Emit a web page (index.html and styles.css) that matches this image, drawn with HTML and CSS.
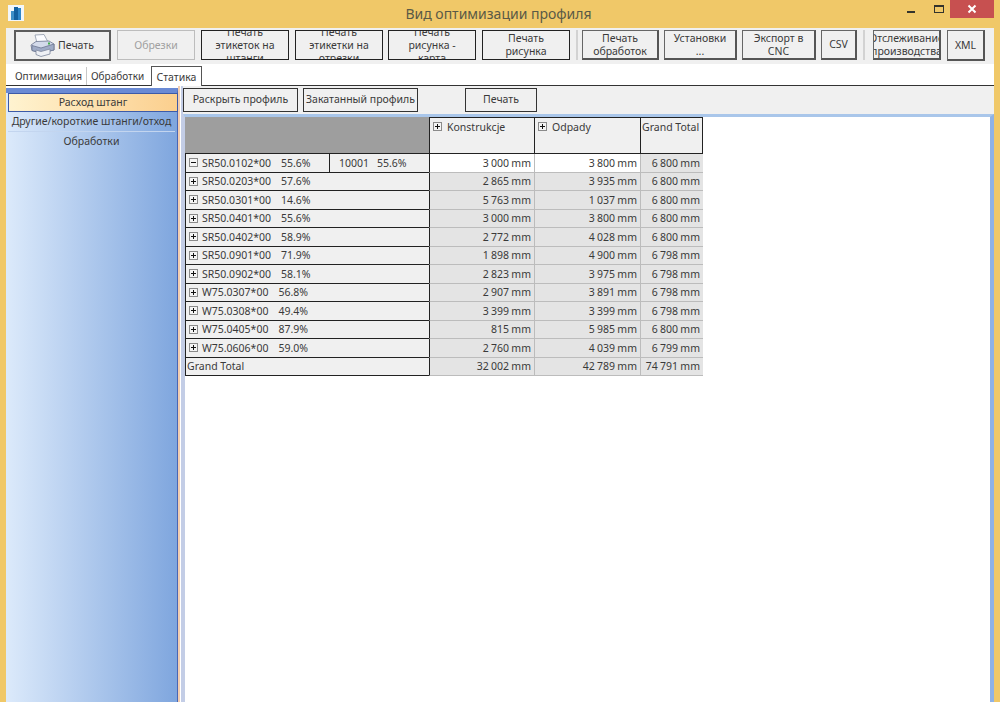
FILE: index.html
```html
<!DOCTYPE html>
<html lang="ru">
<head>
    <meta charset="UTF-8">
    <title>Вид оптимизации профиля</title>
    <link rel="stylesheet" href="styles.css">
</head>
<body>
    <div id="titlebar">
        <svg class="appicon" width="16" height="16" viewBox="0 0 16 16">
            <rect width="16" height="16" fill="#f2f6fa"/>
            <rect x="3" y="6" width="3" height="9" fill="#3f8fc8"/>
            <rect x="6" y="2" width="4" height="13" fill="#14609f"/>
            <rect x="10" y="3" width="3" height="12" fill="#2f86c8"/>
        </svg>
        <div class="title">Вид оптимизации профиля</div>
        <div class="wincontrols">
            <span class="winmin"></span>
            <span class="winmax"></span>
            <span class="winclose">
                <svg width="10" height="10" viewBox="0 0 10 10"><path d="M1.5 1.5L8.5 8.5M8.5 1.5L1.5 8.5" stroke="#fff" stroke-width="2"/></svg>
            </span>
        </div>
    </div>

    <div id="main">
        <div id="toolbar">
            <button class="btn w-print thick">
                <svg width="25" height="23" viewBox="0 0 25 23">
                    <path d="M5 1L14 0.5L18 8L7 9Z" fill="#fbfcff" stroke="#8d97a8" stroke-width="0.8"/>
                    <path d="M1 11L6 7.5L19 7L24 10V16L11 19L2 16.5Z" fill="#d3daea" stroke="#6c7690" stroke-width="0.8"/>
                    <path d="M2 11.5L11 14L24 10V16L11 19L2 16.5Z" fill="#9fabc6" stroke="#6c7690" stroke-width="0.8"/>
                    <path d="M6 16L11 17.5L20 15V20L11 22.5L6 20.5Z" fill="#eef0f5" stroke="#7c869c" stroke-width="0.8"/>
                    <rect x="18" y="8.5" width="2" height="2" fill="#3fae49"/>
                </svg>
                <span>Печать</span>
            </button>
            <button class="btn w-trim disabled">Обрезки</button>
            <button class="btn w-88 dark">Печать<br>этикеток на<br>штанги</button>
            <button class="btn w-88 dark tight">Печать<br>этикетки на<br>отрезки</button>
            <button class="btn w-88 dark">Печать<br>рисунка -<br>карта</button>
            <button class="btn w-88 dark">Печать<br>рисунка</button>
            <div class="sep"></div>
            <button class="btn w-proc">Печать<br>обработок</button>
            <button class="btn w-setup">Установки<br>...</button>
            <button class="btn w-cnc">Экспорт в<br>CNC</button>
            <button class="btn w-csv">CSV</button>
            <div class="sep sep-wide"></div>
            <button class="btn w-track">Отслеживание<br>производства</button>
            <button class="btn w-xml">XML</button>
        </div>

        <div id="tabs">
            <div class="tab tab-first">Оптимизация</div>
            <div class="tab tab-next">Обработки</div>
            <div class="tab active">Статика</div>
        </div>

        <div id="content">
            <div id="sidebar">
                <div class="side-item selected">Расход штанг</div>
                <div class="side-item">Другие/короткие штанги/отход</div>
                <div class="side-item">Обработки</div>
            </div>
            <div id="splitter"></div>
            <div id="panel">
                <div id="subbar">
                    <button class="btn sub w-open">Раскрыть профиль</button>
                    <button class="btn sub w-rolled">Закатанный профиль</button>
                    <button class="btn sub w-subprint">Печать</button>
                </div>
                <div id="gridarea">
                    <div id="pivot">
                        <div class="corner"></div>
                        <div class="colhead"><i class="box plus"></i>Konstrukcje</div>
                        <div class="colhead"><i class="box plus"></i>Odpady</div>
                        <div class="colhead total">Grand Total</div>

                        <div class="rowhead split"><i class="box minus"></i><span class="code">SR50.0102*00</span><span>55.6%</span></div>
                        <div class="rowhead sub-head"><span class="code">10001</span><span>55.6%</span></div>
                        <div class="val white">3 000 mm</div>
                        <div class="val white">3 800 mm</div>
                        <div class="val">6 800 mm</div>

                        <div class="rowhead wide"><i class="box plus"></i><span class="code">SR50.0203*00</span><span>57.6%</span></div>
                        <div class="val">2 865 mm</div><div class="val">3 935 mm</div><div class="val">6 800 mm</div>

                        <div class="rowhead wide"><i class="box plus"></i><span class="code">SR50.0301*00</span><span>14.6%</span></div>
                        <div class="val">5 763 mm</div><div class="val">1 037 mm</div><div class="val">6 800 mm</div>

                        <div class="rowhead wide"><i class="box plus"></i><span class="code">SR50.0401*00</span><span>55.6%</span></div>
                        <div class="val">3 000 mm</div><div class="val">3 800 mm</div><div class="val">6 800 mm</div>

                        <div class="rowhead wide"><i class="box plus"></i><span class="code">SR50.0402*00</span><span>58.9%</span></div>
                        <div class="val">2 772 mm</div><div class="val">4 028 mm</div><div class="val">6 800 mm</div>

                        <div class="rowhead wide"><i class="box plus"></i><span class="code">SR50.0901*00</span><span>71.9%</span></div>
                        <div class="val">1 898 mm</div><div class="val">4 900 mm</div><div class="val">6 798 mm</div>

                        <div class="rowhead wide"><i class="box plus"></i><span class="code">SR50.0902*00</span><span>58.1%</span></div>
                        <div class="val">2 823 mm</div><div class="val">3 975 mm</div><div class="val">6 798 mm</div>

                        <div class="rowhead wide"><i class="box plus"></i><span class="code">W75.0307*00</span><span>56.8%</span></div>
                        <div class="val">2 907 mm</div><div class="val">3 891 mm</div><div class="val">6 798 mm</div>

                        <div class="rowhead wide"><i class="box plus"></i><span class="code">W75.0308*00</span><span>49.4%</span></div>
                        <div class="val">3 399 mm</div><div class="val">3 399 mm</div><div class="val">6 798 mm</div>

                        <div class="rowhead wide"><i class="box plus"></i><span class="code">W75.0405*00</span><span>87.9%</span></div>
                        <div class="val">815 mm</div><div class="val">5 985 mm</div><div class="val">6 800 mm</div>

                        <div class="rowhead wide"><i class="box plus"></i><span class="code">W75.0606*00</span><span>59.0%</span></div>
                        <div class="val">2 760 mm</div><div class="val">4 039 mm</div><div class="val">6 799 mm</div>

                        <div class="rowhead wide grand">Grand Total</div>
                        <div class="val">32 002 mm</div><div class="val">42 789 mm</div><div class="val">74 791 mm</div>
                    </div>
                </div>
            </div>
        </div>
    </div>
</body>
</html>
```

FILE: styles.css
```css
* {
    box-sizing: border-box;
}
html, body {
    height: 100%;
    margin: 0;
    overflow: hidden;
}
body {
    font-family: "Noto Sans", sans-serif;
    font-size: 10.5px;
    color: #3a3a3a;
    background-color: #f0c868;
    display: flex;
    flex-direction: column;
    padding: 0 6px;
}

/* title bar */
#titlebar {
    height: 28px;
    flex: none;
    display: flex;
    align-items: flex-start;
}
.appicon {
    margin: 5px 0 0 2px;
    flex: none;
}
.title {
    flex: 1;
    text-align: center;
    font-size: 14px;
    line-height: 20px;
    color: #5a5a46;
    padding: 4px 0 0 66px;
}
.wincontrols {
    display: flex;
    align-items: flex-start;
    width: 87px;
    flex: none;
}
.winmin {
    width: 8px;
    height: 2px;
    background-color: #33332c;
    margin: 11px 0 0 0;
}
.winmax {
    width: 10px;
    height: 8px;
    border: 1px solid #33332c;
    border-top-width: 2px;
    margin: 5px 0 0 19px;
}
.winclose {
    width: 44px;
    height: 18px;
    background-color: #c75050;
    margin-left: 6px;
    display: flex;
    align-items: center;
    justify-content: center;
}

#main {
    flex: 1;
    display: flex;
    flex-direction: column;
    background-color: #fff;
    min-height: 0;
}

/* toolbar */
#toolbar {
    height: 36px;
    flex: none;
    background-color: #f0f0f0;
    display: flex;
    align-items: flex-start;
    padding: 2px 0 0 8px;
}
.btn {
    font-family: inherit;
    font-size: 10.5px;
    line-height: 13px;
    color: #3a3a3a;
    background-color: #f0f0f0;
    border: 1px solid #666;
    border-right: 2px solid #555;
    border-bottom: 2px solid #555;
    padding: 0;
    margin: 0 6px 0 0;
    height: 30px;
    overflow: hidden;
    flex: none;
    display: flex;
    align-items: center;
    justify-content: center;
    text-align: center;
    white-space: nowrap;
}
.thick {
    border: 2px solid #5c5c5c;
    height: 31px;
    justify-content: flex-start;
    padding-left: 14px;
}
.thick svg {
    margin-right: 3px;
}
.dark {
    border: 1px solid #222;
}
.disabled {
    border: 1px solid #bdbdbd;
    color: #a0a0a0;
}
.tight { margin-right: 5px; }
.w-print { width: 97px; }
.w-trim { width: 78px; }
.w-88 { width: 88px; }
.w-proc { width: 77px; margin-right: 5px; }
.w-setup { width: 73px; margin-right: 5px; }
.w-cnc { width: 74px; margin-right: 5px; }
.w-csv { width: 36px; }
.w-track { width: 68px; }
.w-xml { width: 38px; height: 31px; }
.sep {
    width: 2px;
    height: 30px;
    background-color: #d2d2d2;
    margin: 0 4px 0 0;
    flex: none;
}
.sep-wide {
    margin-right: 8px;
}

/* tabs */
#tabs {
    height: 22px;
    flex: none;
    display: flex;
    align-items: flex-end;
    padding-left: 4px;
    border-bottom: 1px solid #333;
    background-color: #fff;
}
.tab {
    height: 18px;
    font-size: 10px;
    line-height: 13px;
    padding-top: 3px;
    white-space: nowrap;
}
.tab-first {
    width: 76px;
    padding-left: 5px;
}
.tab-next {
    width: 65px;
    border-left: 1px solid #c8c8c8;
    padding-left: 4px;
}
.active {
    width: 51px;
    font-size: 10.5px;
    text-align: center;
    background-color: #fff;
    border: 1px solid #555;
    border-bottom: none;
    height: 20px;
    padding-top: 4px;
    margin-bottom: -1px;
}

/* left side */
#content {
    flex: 1;
    display: flex;
    min-height: 0;
}
#sidebar {
    width: 172px;
    flex: none;
    margin-top: 2px;
    background: linear-gradient(to right, #dceafb, #7fa6de);
    border-right: 1px solid #4a66b4;
    border-top: 5px solid #6a8ad4;
    padding: 0 0 0 2px;
}
.side-item {
    height: 20px;
    line-height: 19px;
    text-align: center;
    margin-right: 2px;
    border-bottom: 1px solid #c3d5ef;
    white-space: nowrap;
}
.side-item:last-child {
    border-bottom: none;
}
.selected {
    background: linear-gradient(to right, #fff3d0, #fbcf8e);
    border: 1px solid #3c5aa8;
    height: 19px;
    line-height: 17px;
    margin-right: -1px;
}
#splitter {
    width: 5px;
    flex: none;
    background: linear-gradient(to right, #f2cdb0 0, #f2cdb0 2px, #fff 2px, #fff 3px, #c3cde6 3px);
}

/* right side */
#panel {
    flex: 1;
    display: flex;
    flex-direction: column;
    min-width: 0;
}
#subbar {
    height: 28px;
    flex: none;
    background-color: #f0f0f0;
    display: flex;
    align-items: flex-start;
    padding-top: 2px;
}
.sub {
    height: 24px;
    border: 1px solid #333;
    padding-bottom: 1px;
}
.w-open { width: 115px; margin-right: 5px; }
.w-rolled { width: 115px; margin-right: 47px; }
.w-subprint { width: 72px; }

#gridarea {
    flex: 1;
    background-color: #fff;
    border-top: 3px solid #a9c6ea;
    border-right: 4px solid #8fb2e6;
    border-left: 2px solid #c3cde6;
    min-height: 0;
}
#pivot {
    display: grid;
    grid-template-columns: 145px 99px 105px 106px 63px;
    grid-auto-rows: 18.5px;
    grid-template-rows: 37px;
    width: 518px;
}
.corner {
    grid-column: span 2;
    background-color: #9e9e9e;
    border-bottom: 1px solid #222;
}
.colhead {
    background-color: #f0f0f0;
    border: 1px solid #222;
    border-right: none;
    display: flex;
    align-items: flex-start;
    padding: 3px 0 0 3px;
    line-height: 13px;
    white-space: nowrap;
}
.colhead.total {
    border-right: 1px solid #222;
    padding-left: 1px;
}

/* expand / collapse box, the sign is drawn with two thin bars */
.box {
    width: 9px;
    height: 9px;
    border: 1px solid #8a8a8a;
    background-color: #f4f4f4;
    background-repeat: no-repeat;
    margin-right: 4px;
    flex: none;
}
.plus {
    background-image: linear-gradient(#111, #111), linear-gradient(#111, #111);
    background-size: 5px 1px, 1px 5px;
    background-position: 1px 3px, 3px 1px;
}
.minus {
    background-image: linear-gradient(#111, #111);
    background-size: 5px 1px;
    background-position: 1px 3px;
}
.colhead .box {
    margin: 1px 5px 0 0;
}
.rowhead {
    background-color: #f0f0f0;
    border-bottom: 1px solid #222;
    border-left: 1px solid #222;
    display: flex;
    align-items: center;
    padding-left: 3px;
    white-space: nowrap;
}
.split {
    border-right: 1px solid #222;
}
.sub-head {
    border-left: none;
    padding-left: 9px;
}
.sub-head .code {
    margin-right: 8px;
}
.wide {
    grid-column: span 2;
}
.code {
    margin-right: 10px;
}
.grand {
    padding-left: 1px;
}
.val {
    background-color: #e4e4e4;
    border-bottom: 1px solid #bcbcbc;
    border-left: 1px solid #222;
    display: flex;
    align-items: center;
    justify-content: flex-end;
    padding-right: 3px;
    white-space: nowrap;
    word-spacing: -0.4px;
}
.val + .val {
    border-left: 1px solid #bcbcbc;
}
.white {
    background-color: #fff;
}
```
